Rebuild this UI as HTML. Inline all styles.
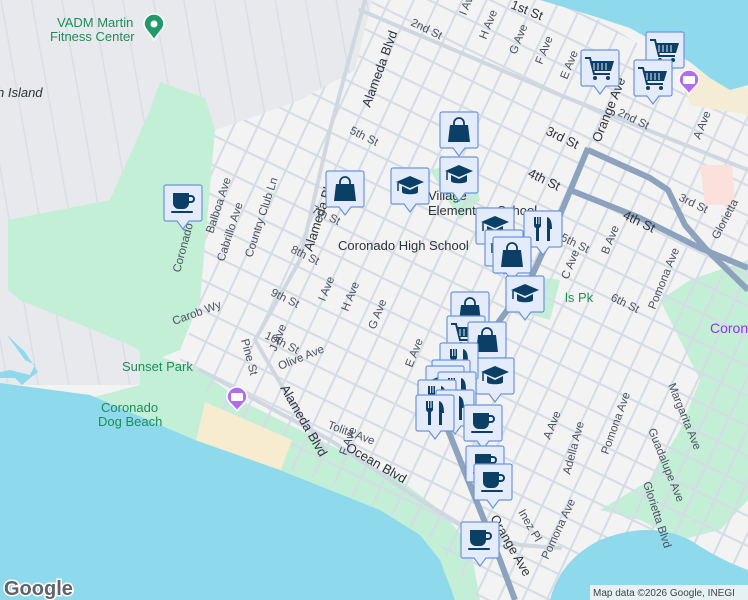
<!DOCTYPE html>
<html><head><meta charset="utf-8"><style>
html,body{margin:0;padding:0;width:748px;height:600px;overflow:hidden;background:#f4f3f3}
svg{display:block}
text{font-family:"Liberation Sans",sans-serif}
.st{font-size:11.5px;fill:#4a5160}
.mj{font-size:13px;fill:#2d333b}
.pk{font-size:13px;fill:#1f8c5c}
</style></head><body>
<svg width="748" height="600" viewBox="0 0 748 600" xmlns="http://www.w3.org/2000/svg">
<defs>
<pattern id="sts" width="400" height="27" patternUnits="userSpaceOnUse" patternTransform="rotate(26)">
<rect width="400" height="27" fill="none"/><line x1="0" y1="1" x2="400" y2="1" stroke="#d6dce5" stroke-width="2.2"/></pattern>
<pattern id="avs" width="22" height="400" patternUnits="userSpaceOnUse" patternTransform="rotate(25)">
<line x1="1" y1="0" x2="1" y2="400" stroke="#d6dce5" stroke-width="2.2"/></pattern>
<pattern id="gl" width="30" height="400" patternUnits="userSpaceOnUse" patternTransform="rotate(-10)">
<line x1="1" y1="0" x2="1" y2="400" stroke="#d8dde5" stroke-width="1.4"/></pattern>
<clipPath id="base"><polygon points="0,0 372,0 355,70 300,100 245,120 215,130 200,300 150,350 145,385 0,385"/></clipPath>
<clipPath id="res"><polygon points="215,130 245,120 300,100 355,70 372,0 560,0 600,20 640,45 748,95 748,600 480,600 440,545 400,520 330,485 290,470 240,430 210,395 180,360 200,300"/></clipPath>
<g id="mk"><path d="M2,0h34a2,2 0 0 1 2,2v32a2,2 0 0 1 -2,2h-11l-6,8l-6,-8h-11a2,2 0 0 1 -2,-2v-32a2,2 0 0 1 2,-2z" fill="#e4ecfc" stroke="#6b95da" stroke-width="1.2"/></g>
<g id="cup"><use href="#mk"/><path d="M9,8h16v10a6,6 0 0 1 -6,6h-4a6,6 0 0 1 -6,-6z M25,10h2a4,4 0 0 1 0,8h-2v-2h2a2,2 0 0 0 0,-4h-2z" fill="#0b3f66"/><rect x="7" y="26" width="22" height="2" rx="1" fill="#0b3f66"/></g>
<g id="bag"><use href="#mk"/><path d="M10,13h18l2,17h-22z" fill="#0b3f66"/><path d="M14,14v-3a5,5 0 0 1 10,0v3" fill="none" stroke="#0b3f66" stroke-width="1.8"/></g>
<g id="cap"><use href="#mk"/><path d="M5,14l14,-6l14,6l-14,6z" fill="#0b3f66"/><path d="M11,18v6c0,3 16,3 16,0v-6l-8,4z" fill="#0b3f66"/><path d="M7,15v8" stroke="#0b3f66" stroke-width="1.5"/></g>
<g id="fork"><use href="#mk"/><path d="M10,6v8a3,3 0 0 0 2,3v13h3v-13a3,3 0 0 0 2,-3v-8h-1.5v7h-1v-7h-1.5v7h-1v-7z M23,6c4,1 5,6 5,12h-2v12h-3z" fill="#0b3f66"/></g>
<g id="cart"><use href="#mk"/><path d="M4,8h5l4,16h16" fill="none" stroke="#0b3f66" stroke-width="2"/><path d="M10,11h23l-3,10h-17z" fill="#0b3f66"/><path d="M13,13v7M17,13v7M21,13v7M25,13v7" stroke="#e4ecfc" stroke-width="1"/><circle cx="14" cy="28" r="2" fill="#0b3f66"/><circle cx="27" cy="28" r="2" fill="#0b3f66"/></g>
</defs>
<rect width="748" height="600" fill="#f4f3f3"/>
<polygon points="0,0 372,0 355,70 300,100 245,120 215,130 200,300 150,350 145,385 0,385" fill="#e8e9ec"/>
<rect x="0" y="0" width="372" height="385" fill="url(#gl)" clip-path="url(#base)"/>
<polygon points="160,82 205,98 215,130 200,300 180,350 155,360 130,345 20,300 8,290 8,220 110,200 150,110" fill="#c2efd6"/>
<polygon points="140,350 200,370 240,400 300,430 350,455 400,480 440,510 470,545 480,600 420,600 380,520 330,490 280,470 195,440 90,398 140,385" fill="#c2efd6"/>
<polygon points="660,300 690,280 748,260 748,500 720,530 680,540 640,520 600,510 650,480 680,430 700,380" fill="#c2efd6"/>
<polygon points="430,170 470,160 480,200 460,220" fill="#c2efd6"/>
<polygon points="520,275 560,280 550,320 515,310" fill="#c2efd6"/>
<g clip-path="url(#res)"><rect width="748" height="600" fill="url(#sts)"/><rect width="748" height="600" fill="url(#avs)"/></g>
<polygon points="205,402 292,440 278,478 195,445" fill="#f8ecd0"/>
<polygon points="680,70 720,70 748,90 748,115 690,105" fill="#f5ecd6"/>
<polygon points="700,165 732,165 735,205 705,205" fill="#fbe0dc"/>
<polygon points="540,0 748,0 748,85 730,90 710,78 690,62 660,45 630,28 590,15" fill="#8fd9ec"/>
<polygon points="0,383 90,395 195,440 280,470 330,490 380,510 420,535 440,560 455,600 0,600" fill="#8fd9ec"/>
<polygon points="7,335 25,360 35,365 30,375 10,370 0,372 0,378 15,378 22,385 30,378 38,372 25,352" fill="#8fd9ec"/>
<path d="M550,600 Q560,560 600,540 Q650,520 690,540 Q720,560 748,570 V600 Z" fill="#8fd9ec"/>
<g fill="none" stroke="#d0d7e1" stroke-width="4" stroke-linecap="round">
<path d="M365,0 L330,130 L300,260 L255,340 L290,400 L325,450"/>
<path d="M200,370 L330,440 L420,500 L470,530 L520,545 L560,548"/>
<path d="M360,10 L560,95 L748,170"/>
</g>
<g fill="none" stroke="#8da3bd" stroke-width="6" stroke-linejoin="round">
<path d="M588,148 L560,215 L530,280 L500,320 L452,395 L448,430 L480,510 L500,560 L515,600"/>
<path d="M588,150 L650,178 L668,190 L685,225 L705,248 L748,290"/>
<path d="M570,190 L640,218 L700,248 L748,268"/>
</g>
<text x="57" y="27" class="pk" font-size="14">VADM Martin</text>
<text x="50" y="41" class="pk" font-size="14">Fitness Center</text>
<path d="M154,14a10,10 0 0 1 10,10c0,5 -6,9 -10,16c-4,-7 -10,-11 -10,-16a10,10 0 0 1 10,-10z" fill="#1f9a68" stroke="#fff" stroke-width="1.5"/><circle cx="154" cy="24" r="3.5" fill="#fff"/>
<text x="-3" y="97" class="mj" font-style="italic" font-size="14">h Island</text>
<text x="338" y="250" class="mj" font-size="14" fill="#555d66">Coronado High School</text>
<text x="428" y="200" class="mj" font-size="14" fill="#555d66">Village</text>
<text x="428" y="215" class="mj" font-size="14" fill="#555d66">Elementary School</text>
<text x="122" y="371" class="pk" font-size="14">Sunset Park</text>
<text x="101" y="412" class="pk" font-size="14">Coronado</text>
<text x="98" y="426" class="pk" font-size="14">Dog Beach</text>
<text x="710" y="333" font-size="14" fill="#9334e6">Coron</text>
<text x="520" y="308" class="pk" font-size="13">Sp</text>
<text x="565" y="302" class="pk" font-size="13">ls Pk</text>
<g class="st">
<text transform="translate(312,252) rotate(-72)" class="mj">Alameda Blvd</text>
<text transform="translate(370,108) rotate(-70)" class="mj">Alameda Blvd</text>
<text transform="translate(280,388) rotate(60)" class="mj">Alameda Blvd</text>
<text transform="translate(345,450) rotate(30)" class="mj">Ocean Blvd</text>
<text transform="translate(490,518) rotate(60)" class="mj">Orange Ave</text>
<text transform="translate(600,143) rotate(-68)" class="mj">Orange Ave</text>
<text transform="translate(510,8) rotate(22)" class="mj">1st St</text>
<text transform="translate(545,134) rotate(26)" class="mj">3rd St</text>
<text transform="translate(527,176) rotate(26)" class="mj">4th St</text>
<text transform="translate(622,218) rotate(26)" class="mj">4th St</text>
<text transform="translate(349,133) rotate(26)">5th St</text>
<text transform="translate(311,212) rotate(26)">7th St</text>
<text transform="translate(290,252) rotate(26)">8th St</text>
<text transform="translate(270,295) rotate(26)">9th St</text>
<text transform="translate(264,338) rotate(26)">10th St</text>
<text transform="translate(280,370) rotate(-22)">Olive Ave</text>
<text transform="translate(174,325) rotate(-20)">Carob Wy</text>
<text transform="translate(327,428) rotate(20)">Tolita Ave</text>
<text transform="translate(241,340) rotate(75)">Pine St</text>
<text transform="translate(180,273) rotate(-75)">Coronado Ave</text>
<text transform="translate(213,234) rotate(-72)">Balboa Ave</text>
<text transform="translate(224,262) rotate(-72)">Cabrillo Ave</text>
<text transform="translate(252,258) rotate(-72)">Country Club Ln</text>
<text transform="translate(325,302) rotate(-68)">I Ave</text>
<text transform="translate(348,312) rotate(-68)">H Ave</text>
<text transform="translate(375,330) rotate(-68)">G Ave</text>
<text transform="translate(412,368) rotate(-68)">E Ave</text>
<text transform="translate(276,352) rotate(-68)">J Ave</text>
<text transform="translate(346,456) rotate(-68)">F Ave</text>
<text transform="translate(410,25) rotate(26)">2nd St</text>
<text transform="translate(466,16) rotate(-68)">I Ave</text>
<text transform="translate(486,40) rotate(-68)">H Ave</text>
<text transform="translate(516,55) rotate(-68)">G Ave</text>
<text transform="translate(542,65) rotate(-68)">F Ave</text>
<text transform="translate(567,80) rotate(-68)">E Ave</text>
<text transform="translate(617,115) rotate(26)">2nd St</text>
<text transform="translate(700,140) rotate(-68)">A Ave</text>
<text transform="translate(678,200) rotate(26)">3rd St</text>
<text transform="translate(560,240) rotate(26)">5th St</text>
<text transform="translate(568,280) rotate(-68)">C Ave</text>
<text transform="translate(608,255) rotate(-68)">B Ave</text>
<text transform="translate(655,310) rotate(-68)">Pomona Ave</text>
<text transform="translate(610,300) rotate(26)">6th St</text>
<text transform="translate(550,440) rotate(-68)">A Ave</text>
<text transform="translate(570,475) rotate(-75)">Adella Ave</text>
<text transform="translate(608,455) rotate(-70)">Pomona Ave</text>
<text transform="translate(548,560) rotate(-65)">Pomona Ave</text>
<text transform="translate(668,385) rotate(68)">Margarita Ave</text>
<text transform="translate(648,430) rotate(68)">Guadalupe Ave</text>
<text transform="translate(643,483) rotate(72)">Glorietta Blvd</text>
<text transform="translate(518,512) rotate(60)">Inez Pl</text>
<text transform="translate(718,240) rotate(-62)">Glorietta</text>
</g>
<path d="M689,70a10,10 0 0 1 10,10c0,5 -6,8 -10,14c-4,-6 -10,-9 -10,-14a10,10 0 0 1 10,-10z" fill="#b36bf0" stroke="#fff" stroke-width="1.5"/>
<rect x="683" y="76" width="12" height="8" rx="1.5" fill="#fff"/>
<path d="M237,387a10,10 0 0 1 10,10c0,5 -6,8 -10,14c-4,-6 -10,-9 -10,-14a10,10 0 0 1 10,-10z" fill="#b36bf0" stroke="#fff" stroke-width="1.5"/>
<rect x="231" y="393" width="12" height="8" rx="1.5" fill="#fff"/>
<use href="#cup" x="164" y="185"/>
<use href="#bag" x="326" y="171"/>
<use href="#cap" x="391" y="168"/>
<use href="#bag" x="440" y="112"/>
<use href="#cap" x="440" y="157"/>
<use href="#cart" x="581" y="50"/>
<use href="#cart" x="646" y="32"/>
<use href="#cart" x="634" y="60"/>
<use href="#cap" x="476" y="208"/>
<use href="#fork" x="524" y="211"/>
<use href="#cap" x="485" y="230"/>
<use href="#bag" x="493" y="237"/>
<use href="#cap" x="506" y="276"/>
<use href="#bag" x="451" y="292"/>
<use href="#cart" x="447" y="316"/>
<use href="#bag" x="468" y="322"/>
<use href="#cap" x="476" y="358"/>
<use href="#fork" x="440" y="343"/>
<use href="#fork" x="432" y="360"/>
<use href="#cap" x="426" y="366"/>
<use href="#fork" x="438" y="372"/>
<use href="#fork" x="418" y="380"/>
<use href="#fork" x="436" y="390"/>
<use href="#fork" x="416" y="395"/>
<use href="#cup" x="464" y="405"/>
<use href="#cup" x="466" y="446"/>
<use href="#cup" x="474" y="464"/>
<use href="#cup" x="461" y="522"/>
<text x="4" y="595" font-size="20" font-weight="bold" fill="#5f6368" stroke="#fff" stroke-width="3" paint-order="stroke">Google</text>
<rect x="590" y="585" width="158" height="15" fill="#f5f5f5" opacity="0.85"/>
<text x="593" y="596" font-size="10" fill="#444">Map data ©2026 Google, INEGI</text>
</svg>
</body></html>
